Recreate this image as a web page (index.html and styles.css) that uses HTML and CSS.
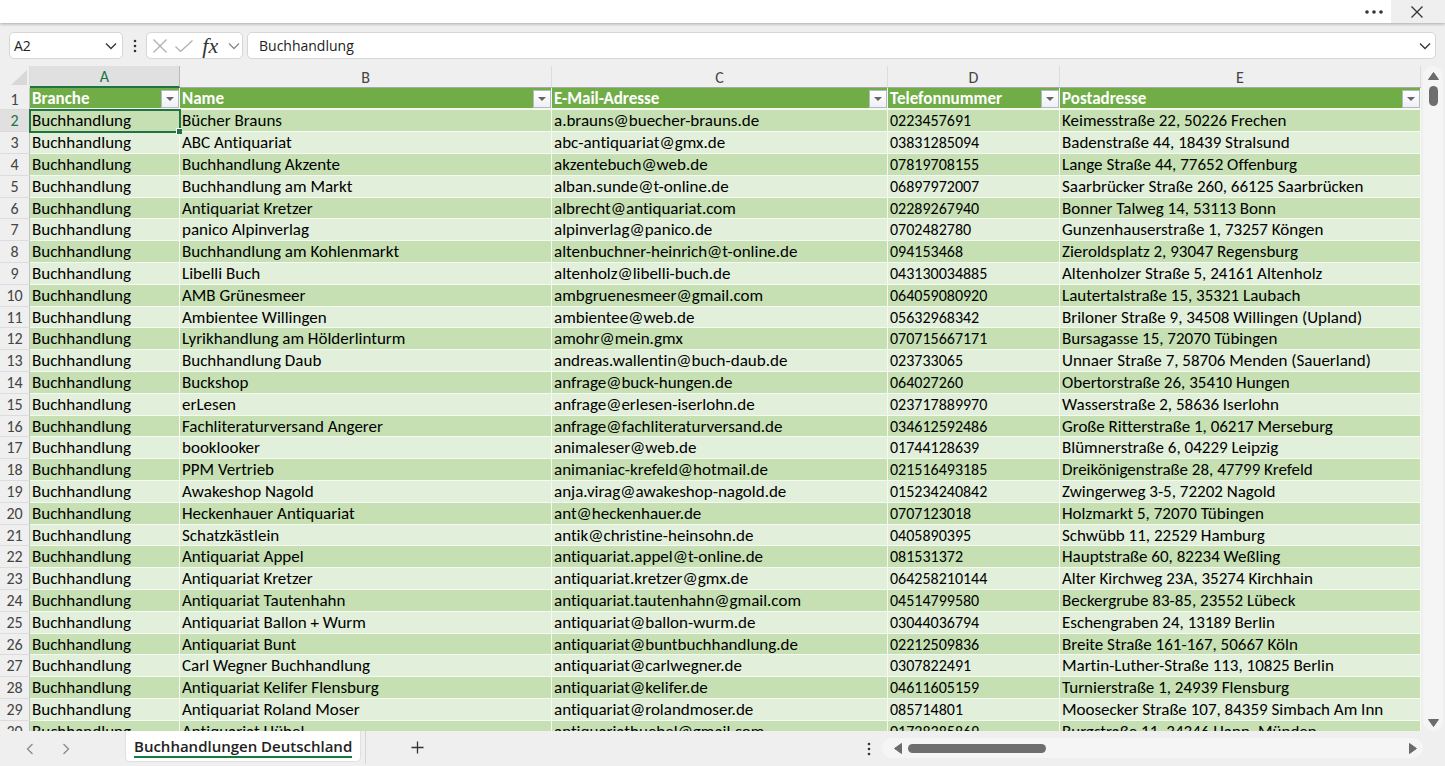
FILE: index.html
```html
<!DOCTYPE html>
<html lang="de">
<head>
  <meta charset="UTF-8">
  <meta name="viewport" content="width=device-width, initial-scale=1">
  <title>Buchhandlungen Deutschland</title>
  <link rel="stylesheet" href="styles.css">
</head>
<body>

<!-- Title bar -->
<header class="title-bar">
  <button class="more-btn" aria-label="Mehr">
    <svg width="20" height="6" viewBox="0 0 20 6"><circle cx="3" cy="3" r="1.8"/><circle cx="10" cy="3" r="1.8"/><circle cx="17" cy="3" r="1.8"/></svg>
  </button>
  <button class="close-btn" aria-label="Schließen">
    <svg class="line" width="12" height="12" viewBox="0 0 12 12"><path d="M.5 .5l11 11M11.5 .5l-11 11"/></svg>
  </button>
</header>

<!-- Formula bar -->
<div class="formula-bar">
  <div class="box name-box">
    <input type="text" value="A2" aria-label="Namenfeld">
    <button aria-label="Namen anzeigen">
      <svg class="line" width="12" height="8" viewBox="0 0 12 8"><path d="M1 1.5l5 5 5-5"/></svg>
    </button>
  </div>
  <svg class="dots" width="4" height="14" viewBox="0 0 4 14"><circle cx="2" cy="2" r="1.3"/><circle cx="2" cy="7" r="1.3"/><circle cx="2" cy="12" r="1.3"/></svg>
  <div class="box actions">
    <button aria-label="Abbrechen"><svg class="line pale" width="14" height="14" viewBox="0 0 14 14"><path d="M.5 .5l13 13M13.5 .5l-13 13"/></svg></button>
    <button aria-label="Eingeben"><svg class="line pale" width="18" height="12" viewBox="0 0 18 12"><path d="M.5 6.500l5 5L17.500 .5"/></svg></button>
    <button class="fx" aria-label="Funktion einfügen"><i>fx</i></button>
    <button aria-label="Funktionen"><svg class="line grey" width="12" height="8" viewBox="0 0 12 8"><path d="M1 1.5l5 5 5-5"/></svg></button>
  </div>
  <div class="box formula">
    <input type="text" value="Buchhandlung" aria-label="Bearbeitungsleiste">
    <button aria-label="Bearbeitungsleiste erweitern">
      <svg class="line" width="12" height="8" viewBox="0 0 12 8"><path d="M1 1.5l5 5 5-5"/></svg>
    </button>
  </div>
</div>

<!-- Sheet -->
<main class="sheet">
  <div class="grid">
    <table>
      <colgroup>
        <col class="col-num"><col class="col-a"><col class="col-b"><col class="col-c"><col class="col-d"><col>
      </colgroup>
      <thead>
        <tr class="letters">
          <th class="corner"><svg width="16" height="15" viewBox="0 0 16 15"><path d="M16 0v15H0z"/></svg></th>
          <th class="current">A</th><th>B</th><th>C</th><th>D</th><th>E</th>
        </tr>
        <tr class="fields" id="fields"><th class="num">1</th></tr>
      </thead>
      <tbody id="rows"></tbody>
    </table>
  </div>
  <div class="vscroll">
    <svg width="11" height="8" viewBox="0 0 11 8"><path d="M5.5 .5L10.500 7.500H.5z"/></svg>
    <div class="thumb"></div>
    <svg class="down" width="11" height="8" viewBox="0 0 11 8"><path d="M5.5 7.500L10.500 .5H.5z"/></svg>
  </div>
</main>

<!-- Sheet tabs -->
<footer class="tab-bar">
  <div class="tab-nav">
    <button aria-label="Zurück"><svg class="line grey" width="8" height="12" viewBox="0 0 8 12"><path d="M6.500 1l-5 5 5 5"/></svg></button>
    <button aria-label="Weiter"><svg class="line grey" width="8" height="12" viewBox="0 0 8 12"><path d="M1.500 1l5 5-5 5"/></svg></button>
  </div>
  <button class="tab"><span>Buchhandlungen Deutschland</span></button>
  <button class="add" aria-label="Neues Blatt"><svg class="line" width="13" height="13" viewBox="0 0 13 13"><path d="M6.500 .5v12M.5 6.500h12"/></svg></button>
  <svg class="dots" width="4" height="14" viewBox="0 0 4 14"><circle cx="2" cy="2" r="1.3"/><circle cx="2" cy="7" r="1.3"/><circle cx="2" cy="12" r="1.3"/></svg>
  <div class="hscroll">
    <svg width="8" height="11" viewBox="0 0 8 11"><path d="M.5 5.500L7.500 .5v10z"/></svg>
    <div class="thumb"></div>
    <svg class="right" width="8" height="11" viewBox="0 0 8 11"><path d="M7.500 5.500L.5 .5v10z"/></svg>
  </div>
</footer>

<script>
  const fields = ["Branche", "Name", "E-Mail-Adresse", "Telefonnummer", "Postadresse"];

  const shops = [
    ["Bücher Brauns", "a.brauns@buecher-brauns.de", "0223457691", "Keimesstraße 22, 50226 Frechen"],
    ["ABC Antiquariat", "abc-antiquariat@gmx.de", "03831285094", "Badenstraße 44, 18439 Stralsund"],
    ["Buchhandlung Akzente", "akzentebuch@web.de", "07819708155", "Lange Straße 44, 77652 Offenburg"],
    ["Buchhandlung am Markt", "alban.sunde@t-online.de", "06897972007", "Saarbrücker Straße 260, 66125 Saarbrücken"],
    ["Antiquariat Kretzer", "albrecht@antiquariat.com", "02289267940", "Bonner Talweg 14, 53113 Bonn"],
    ["panico Alpinverlag", "alpinverlag@panico.de", "0702482780", "Gunzenhauserstraße 1, 73257 Köngen"],
    ["Buchhandlung am Kohlenmarkt", "altenbuchner-heinrich@t-online.de", "094153468", "Zieroldsplatz 2, 93047 Regensburg"],
    ["Libelli Buch", "altenholz@libelli-buch.de", "043130034885", "Altenholzer Straße 5, 24161 Altenholz"],
    ["AMB Grünesmeer", "ambgruenesmeer@gmail.com", "064059080920", "Lautertalstraße 15, 35321 Laubach"],
    ["Ambientee Willingen", "ambientee@web.de", "05632968342", "Briloner Straße 9, 34508 Willingen (Upland)"],
    ["Lyrikhandlung am Hölderlinturm", "amohr@mein.gmx", "070715667171", "Bursagasse 15, 72070 Tübingen"],
    ["Buchhandlung Daub", "andreas.wallentin@buch-daub.de", "023733065", "Unnaer Straße 7, 58706 Menden (Sauerland)"],
    ["Buckshop", "anfrage@buck-hungen.de", "064027260", "Obertorstraße 26, 35410 Hungen"],
    ["erLesen", "anfrage@erlesen-iserlohn.de", "023717889970", "Wasserstraße 2, 58636 Iserlohn"],
    ["Fachliteraturversand Angerer", "anfrage@fachliteraturversand.de", "034612592486", "Große Ritterstraße 1, 06217 Merseburg"],
    ["booklooker", "animaleser@web.de", "01744128639", "Blümnerstraße 6, 04229 Leipzig"],
    ["PPM Vertrieb", "animaniac-krefeld@hotmail.de", "021516493185", "Dreikönigenstraße 28, 47799 Krefeld"],
    ["Awakeshop Nagold", "anja.virag@awakeshop-nagold.de", "015234240842", "Zwingerweg 3-5, 72202 Nagold"],
    ["Heckenhauer Antiquariat", "ant@heckenhauer.de", "0707123018", "Holzmarkt 5, 72070 Tübingen"],
    ["Schatzkästlein", "antik@christine-heinsohn.de", "0405890395", "Schwübb 11, 22529 Hamburg"],
    ["Antiquariat Appel", "antiquariat.appel@t-online.de", "081531372", "Hauptstraße 60, 82234 Weßling"],
    ["Antiquariat Kretzer", "antiquariat.kretzer@gmx.de", "064258210144", "Alter Kirchweg 23A, 35274 Kirchhain"],
    ["Antiquariat Tautenhahn", "antiquariat.tautenhahn@gmail.com", "04514799580", "Beckergrube 83-85, 23552 Lübeck"],
    ["Antiquariat Ballon + Wurm", "antiquariat@ballon-wurm.de", "03044036794", "Eschengraben 24, 13189 Berlin"],
    ["Antiquariat Bunt", "antiquariat@buntbuchhandlung.de", "02212509836", "Breite Straße 161-167, 50667 Köln"],
    ["Carl Wegner Buchhandlung", "antiquariat@carlwegner.de", "0307822491", "Martin-Luther-Straße 113, 10825 Berlin"],
    ["Antiquariat Kelifer Flensburg", "antiquariat@kelifer.de", "04611605159", "Turnierstraße 1, 24939 Flensburg"],
    ["Antiquariat Roland Moser", "antiquariat@rolandmoser.de", "085714801", "Moosecker Straße 107, 84359 Simbach Am Inn"],
    ["Antiquariat Hübel", "antiquariathuebel@gmail.com", "01728385869", "Burgstraße 11, 34346 Hann. Münden"]
  ];

  const fieldRow = document.getElementById('fields');
  fields.forEach(name => {
    const th = document.createElement('th');
    th.innerHTML = `<div class="field">${name}<button class="filter" aria-label="${name} filtern"></button></div>`;
    fieldRow.appendChild(th);
  });

  const rows = document.getElementById('rows');
  shops.forEach((shop, index) => {
    const tr = document.createElement('tr');
    const cells = ["Buchhandlung", ...shop].map(text => `<td>${text}</td>`).join('');
    tr.innerHTML = `<th class="num">${index + 2}</th>${cells}`;
    rows.appendChild(tr);
  });
  rows.rows[0].cells[0].classList.add('current');
  rows.rows[0].cells[1].classList.add('selected');
</script>

</body>
</html>
```
FILE: styles.css
```css
* {
  box-sizing: border-box;
}
body {
  margin: 0;
  height: 100vh;
  display: flex;
  flex-direction: column;
  overflow: hidden;
  background: #efefef;
  color: #222;
  font-family: "Open Sans", sans-serif;
  font-size: 14px;
}
button {
  display: flex;
  align-items: center;
  justify-content: center;
  padding: 0;
  border: none;
  background: none;
  color: inherit;
  font: inherit;
  cursor: pointer;
}
input {
  flex: 1;
  min-width: 0;
  padding: 0;
  border: none;
  outline: none;
  background: none;
  color: #222;
  font: inherit;
}
svg {
  display: block;
  flex: none;
  fill: #333;
}
svg.line {
  fill: none;
  stroke: #333;
  stroke-width: 1.3;
}
svg.pale {
  stroke: #b0b0b0;
}
svg.grey {
  stroke: #8a8a8a;
}

/* Title bar */
.title-bar {
  position: relative;
  display: flex;
  justify-content: flex-end;
  flex: none;
  height: 23px;
  background: #fff;
  box-shadow: 0 1px 3px rgba(0, 0, 0, 0.3);
}
.more-btn {
  width: 34px;
}
.close-btn {
  width: 54px;
  padding-right: 2px;
  background: #efefef;
}

/* Formula bar */
.formula-bar {
  display: flex;
  align-items: center;
  flex: none;
  height: 43px;
  padding: 2px 9px 0;
}
.box {
  display: flex;
  align-items: center;
  height: 27px;
  border: 1px solid #d6d6d6;
  border-radius: 5px;
  background: #fff;
}
.name-box {
  width: 114px;
  padding: 0 5px 0 4px;
}
.formula-bar .dots {
  margin: 0 9px 0 10px;
}
.actions {
  width: 97px;
  margin-right: 4px;
  padding: 0 2px 0 6px;
  justify-content: space-between;
}
.fx {
  width: 20px;
  color: #333;
  font-family: "Liberation Serif", serif;
  font-size: 22px;
  line-height: 24px;
}
.formula {
  flex: 1;
  padding: 0 4px 0 11px;
}

/* Sheet */
.sheet {
  display: flex;
  flex: 1;
  min-height: 0;
}
.grid {
  flex: 1;
  overflow: hidden;
}
table {
  width: 100%;
  table-layout: fixed;
  border-collapse: separate;
  border-spacing: 0;
  color: #000;
  font-family: Carlito, Lato, sans-serif;
  font-size: 17px;
  font-variant-ligatures: none;
  line-height: 20px;
}
.col-num {
  width: 30px;
}
.col-a {
  width: 150px;
}
.col-b {
  width: 372px;
}
.col-c {
  width: 336px;
}
.col-d {
  width: 172px;
}
th,
td {
  height: 22px;
  padding: 1px 0 0 2px;
  border-right: 1px solid #f4faf0;
  border-bottom: 1px solid #f4faf0;
  text-align: left;
  white-space: nowrap;
}
tbody tr:nth-child(5n) > * {
  height: 21px;
  line-height: 19px;
}
tbody td {
  background: #e2efda;
}
tbody tr:nth-child(odd) td {
  background: #c6e0b4;
}
td:nth-child(5) {
  font-size: 16px;
}
.letters th {
  padding: 1px 0 0;
  border-right-color: #dcdcdc;
  border-bottom-color: #a9a9a9;
  color: #444;
  font-size: 16px;
  font-weight: 400;
  line-height: 19px;
  text-align: center;
}
.letters th.current {
  border-right-color: #bbb;
  border-bottom: 2px solid #217346;
  background: #e0e0e0;
  color: #217346;
}
.letters .corner {
  border-bottom-color: #efefef;
}
.corner svg {
  margin: 0 2px 0 auto;
  fill: #d8d8d8;
}
th.num {
  padding: 1px 0 0;
  border-right-color: #c4c4c4;
  border-bottom-color: #dcdcdc;
  color: #444;
  font-size: 16px;
  font-weight: 400;
  text-align: center;
}
th.num.current {
  background: #e0e0e0;
  color: #217346;
}
.fields th {
  border-bottom-width: 2px;
  background: #70ad47;
  color: #fff;
  line-height: 19px;
}
.fields th.num {
  border-bottom-width: 1px;
  background: #efefef;
  color: #444;
}
.field {
  display: flex;
  align-items: center;
  justify-content: space-between;
}
.filter {
  width: 18px;
  height: 18px;
  border: 1px solid #b4b8c0;
  background: linear-gradient(#fff, #eef0f4);
}
.filter::before {
  content: "";
  border: 4px solid transparent;
  border-top-color: #666;
  border-bottom: none;
}
.selected {
  position: relative;
  outline: 2px solid #217346;
  outline-offset: -1px;
}
.selected::after {
  content: "";
  position: absolute;
  right: -3px;
  bottom: -3px;
  width: 5px;
  height: 5px;
  border-top: 1px solid #fff;
  border-left: 1px solid #fff;
  background: #217346;
}

/* Scroll bars */
.vscroll,
.hscroll {
  display: flex;
  align-items: center;
  border-radius: 10px;
  background: #f5f5f5;
}
.vscroll svg,
.hscroll svg {
  fill: #6b6b6b;
  stroke: #6b6b6b;
  stroke-linejoin: round;
}
.thumb {
  border-radius: 5px;
  background: #6e6e6e;
}
.vscroll {
  flex-direction: column;
  width: 20px;
  margin: 0 2px;
  padding: 6px 0 4px;
}
.vscroll .thumb {
  width: 9px;
  height: 20px;
  margin-top: 6px;
}
.vscroll .down {
  margin-top: auto;
}

/* Sheet tabs */
.tab-bar {
  display: flex;
  flex: none;
  height: 35px;
}
.tab-nav {
  display: flex;
  justify-content: space-between;
  width: 125px;
  padding: 0 54px 0 25px;
}
.tab-nav button {
  width: 10px;
}
.tab {
  align-items: flex-start;
  height: 31px;
  padding: 5px 8px 0;
  border: 1px solid #e0e0e0;
  border-top: none;
  border-radius: 0 0 5px 5px;
  background: #fff;
  font-size: 15px;
  font-weight: 600;
  line-height: 20px;
}
.tab span {
  border-bottom: 2px solid #107c41;
}
.add {
  width: 104px;
  height: 33px;
  margin-left: 4px;
  border-left: 1px solid #d6d6d6;
}
.tab-bar .dots {
  margin: 11px 11px 0 auto;
}
.hscroll {
  width: 541px;
  height: 20px;
  margin: 7px 22px 0 0;
  padding: 0 6px 0 12px;
}
.hscroll .thumb {
  width: 138px;
  height: 9px;
  margin-left: 6px;
}
.hscroll .right {
  margin-left: auto;
}
```
